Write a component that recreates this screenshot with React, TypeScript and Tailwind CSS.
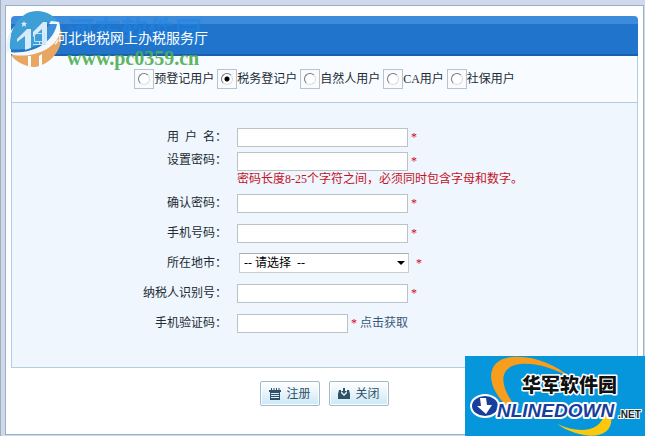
import { useState } from "react";
import type { ReactNode } from "react";
import clsx from "clsx";

const userTypes = ["预登记用户", "税务登记户", "自然人用户", "CA用户", "社保用户"];

interface RowProps {
  id: string;
  label: string;
  tall?: boolean;
  children: ReactNode;
}

function Row({ id, label, tall, children }: RowProps) {
  return (
    <div className={clsx("grid grid-cols-[215px_1fr] gap-[10px]", tall ? "h-9 items-start" : "h-[30px] items-center")}>
      <label htmlFor={id} className="text-right whitespace-pre leading-4">
        {label}
      </label>
      <div>{children}</div>
    </div>
  );
}

function Required() {
  return <span className="text-[#d9001b]">*</span>;
}

function TextBox({ id, type = "text", short }: { id: string; type?: string; short?: boolean }) {
  return (
    <input
      id={id}
      type={type}
      className={clsx("h-[19px] border border-[#b9c3c8] bg-white px-1 outline-none", short ? "w-[111px]" : "w-[171px]")}
    />
  );
}

function SiteLogo() {
  return (
    <svg className="h-[58px] w-[62px]" viewBox="0 0 62 58" aria-hidden="true">
      <path d="M2 43 C0 32 3 22 10 16 C5 24 4 32 5 40 Z" fill="#e8f3fc" />
      <path d="M5 39 C4 17 16 1 32 1 C42 1 50 6 54 14 L40 11 L40 32 C30 38 16 41 5 39 Z" fill="#3d9fd6" />
      <path d="M45 14 L52 14 C51 25 46 31 40 35 L40 20 Z" fill="#3d8fd8" />
      <path d="M56 19 C60 40 44 55 30 57 C20 57 10 51 6 45 C28 46 46 38 56 19 Z" fill="#e8a660" />
      <path d="M2 42 C26 45 48 34 52 14 L44 14 L46 11 L54 12 C61 32 36 49 8 45 Z" fill="#f2f8fd" />
      <path d="M12 29 L22 19 L26 19 L26 38 L20 40 L20 26 L12 32 Z" fill="#d8ebfa" />
      <path d="M28 22 L38 12 L42 12 L42 32 L37 35 L37 19 L28 27 Z" fill="#d8ebfa" />
      <path d="M23 46 L26 46 L26 57 L23 56 Z M34 46 L37 44 L37 56 L34 57 Z" fill="#fff" />
      <path d="M19 11 L20 13 L22 13 L20.500 14.500 L21 17 L19 15.500 L17 17 L17.500 14.500 L16 13 L18 13 Z" fill="#d8ecfa" />
    </svg>
  );
}

function DownloadBadge() {
  return (
    <svg className="block h-20 w-[180px]" viewBox="0 0 180 80" role="img" aria-label="华军软件园 ONLINEDOWN.NET">
      <rect width="180" height="80" fill="#0596dc" />
      <path d="M42 50 C20 30 20 3 47 1 C68 -1 90 8 106 22 C86 10 64 5 50 9 C33 14 36 32 50 50 Z" fill="#f99d1c" />
      <path d="M92 68 C114 78 136 76 139 58 L146 58 C151 86 115 84 92 68 Z" fill="#fcc80c" />
      <text x="57" y="36" fontSize="19" fontWeight="900" fill="#111" stroke="#fff" strokeWidth="3" paintOrder="stroke" strokeLinejoin="round" fontFamily="'Noto Sans CJK SC', sans-serif">华军软件园</text>
      <ellipse cx="20" cy="50" rx="15" ry="12" fill="#fff" />
      <ellipse cx="20" cy="50" rx="13" ry="10" fill="#183e9c" />
      <text x="32" y="61" fontSize="19" fontWeight="bold" fontStyle="italic" fill="#183e9c" stroke="#fff" strokeWidth="4" paintOrder="stroke" strokeLinejoin="round" fontFamily="'Liberation Sans', sans-serif">NLINEDOWN</text>
      <path d="M15 42 L21 42 L22 49 L27 49 L21 58 L12 50 L16 50 Z" fill="#fff" />
      <text x="153" y="62" fontSize="10" fontWeight="bold" fill="#222" stroke="#fff" strokeWidth="2" paintOrder="stroke" fontFamily="'Liberation Sans', sans-serif">.NET</text>
    </svg>
  );
}

function RegisterIcon() {
  return (
    <svg className="h-3 w-3" viewBox="0 0 12 12" aria-hidden="true">
      <path d="M0 2h12v2H0zM1 4h10v8H1z" fill="#2f5266" />
      <path d="M2.500 0v3M5 0v3M7.500 0v3M10 0v3" stroke="#2f5266" />
      <path d="M2 5.500h8M2 7.500h8M2 9.500h8" stroke="#dceefa" />
    </svg>
  );
}

function CloseIcon() {
  return (
    <svg className="h-3 w-3" viewBox="0 0 12 12" aria-hidden="true">
      <path d="M0 6l1-4h2v3l3 3 3-3V2h2l1 4v5H0z" fill="#2f5266" />
      <path d="M5 0h2v3h2L6 6 3 3h2z" fill="#2f5266" />
    </svg>
  );
}

function ActionButton({ icon, children }: { icon: ReactNode; children: ReactNode }) {
  return (
    <button
      type="button"
      className="flex h-[25px] w-[60px] items-center justify-center gap-[5px] rounded-xs border border-[#9dbbcb] bg-linear-to-b from-white to-[#cde7f7] text-[#2f5266] ring-1 ring-white ring-inset"
    >
      {icon}
      {children}
    </button>
  );
}

export default function App() {
  const [userType, setUserType] = useState("税务登记户");

  return (
    <div className="relative border-l border-[#9fb0bb] bg-[#d0d9ea] pt-[5px] pb-px pl-1 pr-px font-['Liberation_Serif','Noto_Sans_CJK_SC',serif] text-xs text-[#222b33]">
      <main className="border border-[#94b0cb] bg-white px-[5px] pt-[10px] pb-7">
        <header className="flex h-10 items-center rounded-t border-b-2 border-[#1b5fae] bg-linear-to-b from-[#3d8cdb] from-20% to-[#2174cb] to-20% pt-2 pl-[22px] text-white">
          <div className="relative z-10 flex items-center gap-2">
            <svg className="h-4 w-[13px]" viewBox="0 0 13 16" fill="none" stroke="#c5e3fa" aria-hidden="true">
              <path d="M1.500 2.500h10v8h-10zM0 13.500h13M6.500 11v2" />
            </svg>
            <h1 className="text-sm whitespace-nowrap">河北地税网上办税服务厅</h1>
          </div>
        </header>

        <form>
          <fieldset className="flex h-[46px] items-center justify-center gap-[3px] border-x border-[#b5cddf] bg-[#f8fbff]">
            {userTypes.map((type) => (
              <label key={type} className="flex items-center whitespace-nowrap">
                <span className="flex size-5 items-center justify-center border border-[#b9c3c8]">
                  <input
                    type="radio"
                    name="userType"
                    checked={userType === type}
                    onChange={() => setUserType(type)}
                    className="size-3 appearance-none rounded-full border border-t-[#777] border-r-[#ddd] border-b-[#ddd] border-l-[#777] bg-white checked:bg-[radial-gradient(circle,#000_2px,#fff_3px)]"
                  />
                </span>
                {type}
              </label>
            ))}
          </fieldset>

          <section className="border border-[#b5cddf] bg-[#eff6fe] pt-[19px] pb-[29px]">
            <Row id="username" label={"用\u00a0\u00a0户\u00a0\u00a0名："}>
              <TextBox id="username" /> <Required />
            </Row>
            <Row id="password" label="设置密码：" tall>
              <TextBox id="password" type="password" /> <Required />
              <p className="leading-4 text-[#c4121f]">密码长度8-25个字符之间，必须同时包含字母和数字。</p>
            </Row>
            <Row id="confirm" label="确认密码：">
              <TextBox id="confirm" type="password" /> <Required />
            </Row>
            <Row id="phone" label="手机号码：">
              <TextBox id="phone" /> <Required />
            </Row>
            <Row id="city" label="所在地市：">
              <span className="relative mr-1 ml-[2px] inline-block">
                <select id="city" className="h-5 w-[170px] appearance-none border border-[#c9d0d4] border-t-[#a9adb0] bg-white pl-1 text-black">
                  <option>-- 请选择{"\u00a0"} --</option>
                </select>
                <svg className="pointer-events-none absolute top-2 right-1 h-1 w-2" viewBox="0 0 8 4" aria-hidden="true">
                  <path d="M0 0h8L4 4z" />
                </svg>
              </span>{" "}
              <Required />
            </Row>
            <Row id="taxpayer" label="纳税人识别号：">
              <TextBox id="taxpayer" /> <Required />
            </Row>
            <Row id="code" label="手机验证码：">
              <TextBox id="code" short /> <Required />{" "}
              <a href="#code" className="text-[#3b5878]">点击获取</a>
            </Row>
          </section>

          <div className="flex justify-center gap-[9px] pt-[13px]">
            <ActionButton icon={<RegisterIcon />}>注册</ActionButton>
            <ActionButton icon={<CloseIcon />}>关闭</ActionButton>
          </div>
        </form>
      </main>

      <div className="pointer-events-none absolute top-[10px] left-1 flex">
        <SiteLogo />
        <div className="flex flex-col pt-1">
          <span className="font-['Noto_Sans_CJK_SC',sans-serif] text-[27px] leading-8 font-bold text-[#1a86e6] opacity-50">河东软件园</span>
          <span className="text-xl leading-6 font-bold text-[#4caf50] opacity-90">www.pc0359.cn</span>
        </div>
      </div>

      <div className="absolute right-0 bottom-0">
        <DownloadBadge />
      </div>
    </div>
  );
}
